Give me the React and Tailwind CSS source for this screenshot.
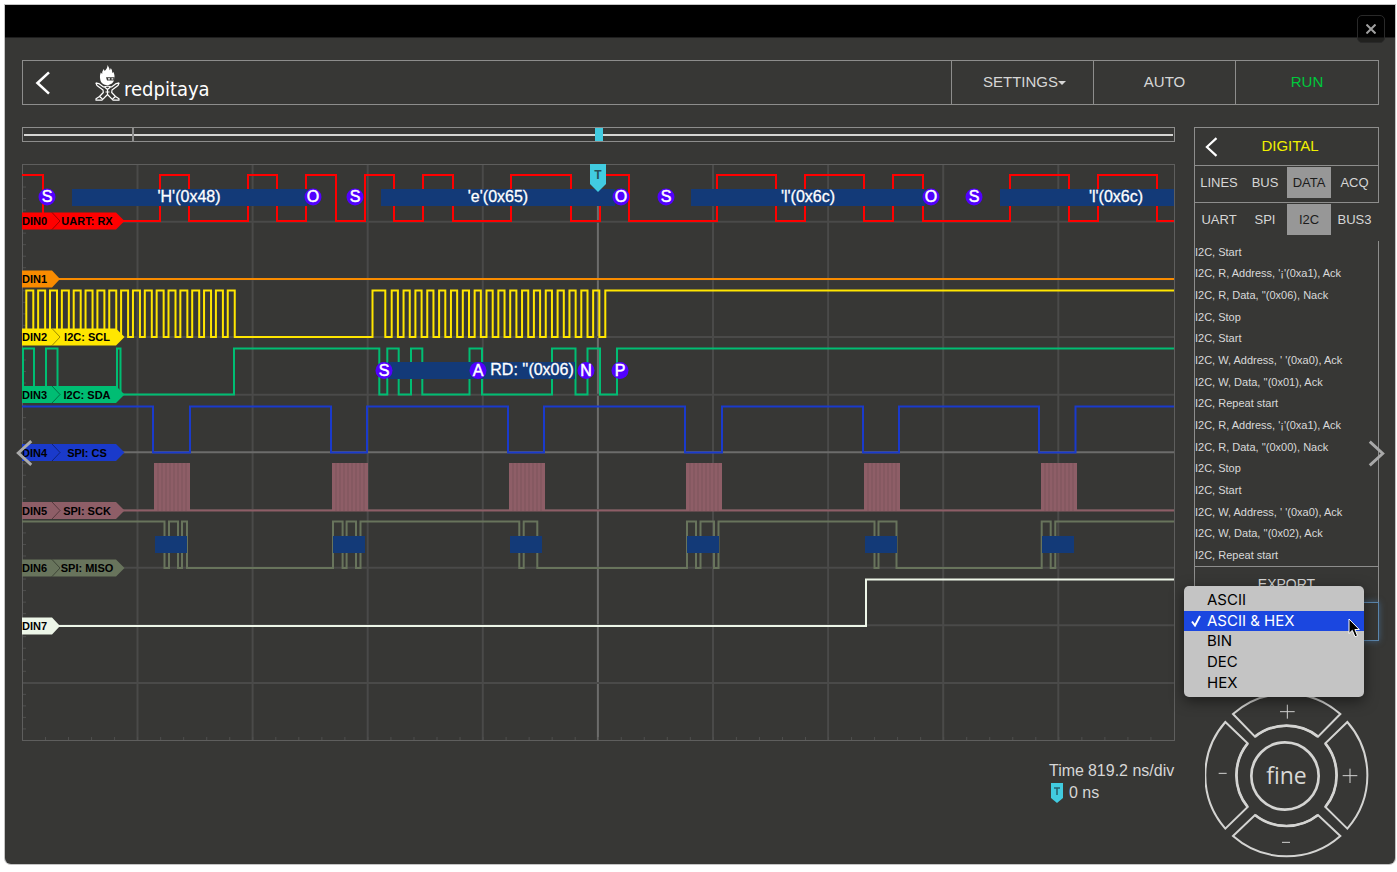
import React from "react";

const LEFT = 22;
const RIGHT = 1174;
const TOP = 164;
const BOTTOM = 741;

const range = (n) => Array.from({ length: n }, (_, i) => i);
const pulses = (start, count, period, width) =>
  range(count).flatMap((i) => [start + i * period, start + i * period + width]);

const CHANNELS = [
  {
    id: "DIN0", label: "UART: RX", color: "#ff0000", y: 221, high: 175, startHigh: true,
    edges: [43, 160, 189, 248, 277, 306, 336, 365, 394, 423, 453, 511, 571, 600, 629, 717, 776, 805, 864, 893, 923, 1010, 1069, 1098, 1157],
  },
  { id: "DIN1", color: "#f98b00", y: 279, high: 233, edges: [] },
  {
    id: "DIN2", label: "I2C: SCL", color: "#ffe600", y: 337, high: 290.5,
    edges: [...pulses(26.3, 18, 11.85, 7), 372.5, 385.3, ...pulses(391.7, 18, 11.85, 6.2), 605.3],
  },
  {
    id: "DIN3", label: "I2C: SDA", color: "#00bd73", y: 394.5, high: 348.5,
    edges: [23, 34, 46, 57.5, 117, 120.5, 234, 379.3, 387.3, 398.7, 411, 422.3, 469.5, 482, 552, 575.5, 587.5, 600, 617],
  },
  {
    id: "DIN4", label: "SPI: CS", color: "#1a3acb", y: 452.5, high: 406.5, startHigh: true,
    edges: [153, 190, 331, 367, 508, 544, 685, 722, 863, 899, 1039, 1075.5],
  },
  { id: "DIN5", label: "SPI: SCK", color: "#8e5e67", y: 510.5, high: 464, edges: [] },
  {
    id: "DIN6", label: "SPI: MISO", color: "#68745c", y: 568, high: 521.5, startHigh: true,
    edges: [164.5, 169, 178, 182, 187, 333, 342.6, 346.6, 356, 360.5, 519.3, 523.7, 537.3, 687, 696, 700.5, 714, 718.5, 874.5, 878.5, 896.5, 1041.7, 1050.7, 1055.3],
  },
  { id: "DIN7", color: "#edf6e8", y: 626, high: 579.5, edges: [866] },
];

const SPI_FRAMES = [154, 332, 509, 686, 864, 1041];

const UART_BARS = [[72, 307], [381, 615], [691, 925], [1000, 1174]];
const UART_TEXT = [["'H'(0x48)", 189], ["'e'(0x65)", 498], ["'l'(0x6c)", 808], ["'l'(0x6c)", 1116]];
const UART_MARKS = [["S", 47], ["O", 313], ["S", 355], ["O", 621], ["S", 666], ["O", 931], ["S", 974]];
const I2C_MARKS = [["S", 384], ["A", 478], ["N", 586], ["P", 620]];

const LOG = [
  "I2C, Start",
  "I2C, R, Address, '¡'(0xa1), Ack",
  "I2C, R, Data, ''(0x06), Nack",
  "I2C, Stop",
  "I2C, Start",
  "I2C, W, Address, ' '(0xa0), Ack",
  "I2C, W, Data, ''(0x01), Ack",
  "I2C, Repeat start",
  "I2C, R, Address, '¡'(0xa1), Ack",
  "I2C, R, Data, ''(0x00), Nack",
  "I2C, Stop",
  "I2C, Start",
  "I2C, W, Address, ' '(0xa0), Ack",
  "I2C, W, Data, ''(0x02), Ack",
  "I2C, Repeat start",
];

const FORMATS = ["ASCII", "ASCII & HEX", "BIN", "DEC", "HEX"];

function wavePath({ startHigh, edges, high, y }) {
  let up = Boolean(startHigh);
  let d = `M${LEFT} ${up ? high : y}`;
  for (const x of edges) {
    up = !up;
    d += `H${x}V${up ? high : y}`;
  }
  return `${d}H${RIGHT}`;
}

function Grid() {
  return (
    <g stroke="#4f4f4e" fill="none">
      {range(9).map((i) => (
        <path key={`v${i}`} strokeWidth="2" stroke={i === 4 ? "#6c6c6b" : "#4a4a49"} d={`M${137.5 + i * 115.1} ${TOP}V${BOTTOM}`} />
      ))}
      {range(9).map((i) => (
        <path key={`h${i}`} strokeWidth="2" stroke={i === 4 ? "#6c6c6b" : "#4a4a49"} d={`M${LEFT} ${221.7 + i * 57.66}H${RIGHT}`} />
      ))}
      {range(49).map((i) => (
        <path key={`l${i}`} d={`M${LEFT} ${175.5 + i * 11.53}h4`} />
      ))}
      {range(49).map((i) => (
        <path key={`b${i}`} d={`M${45.5 + i * 23.03} ${BOTTOM}v-4`} />
      ))}
      <rect x="22.5" y="164.5" width="1152" height="576" stroke="#5e5e5d" />
    </g>
  );
}

function Tag({ id, label, color, y }) {
  const t = y - 8.5;
  const b = y + 8.5;
  return (
    <g fontFamily="'Liberation Sans', Arial, sans-serif" fontSize="11" fontWeight="700">
      {label && <path d={`M52 ${t}H116L124.500 ${y}L116 ${b}H52Z`} fill={color} />}
      <path d={`M22 ${t}H52L60 ${y}L52 ${b}H22Z`} fill={color} />
      {label && <path d={`M52 ${t}L60 ${y}L52 ${b}`} fill="none" stroke="#000" strokeOpacity="0.4" />}
      <text x="22" y={y + 4} fill="#000">{id}</text>
      {label && <text x="87" y={y + 4} fill="#000" textAnchor="middle">{label}</text>}
    </g>
  );
}

function Mark({ letter, x, y }) {
  return (
    <g>
      <circle cx={x} cy={y} r="8.500" fill="#5200ff" />
      <text x={x} y={y + 5} fill="#fff" stroke="#fff" strokeWidth="0.500" textAnchor="middle">{letter}</text>
    </g>
  );
}

function Scope() {
  return (
    <svg viewBox="22 164 1153 578" className="block h-auto w-full" role="img" aria-label="Logic analyser traces">
      <Grid />
      {CHANNELS.map((c) => (
        <path key={c.id} d={wavePath(c)} fill="none" stroke={c.color} strokeWidth="2" />
      ))}
      {SPI_FRAMES.map((x) => (
        <g key={x}>
          <rect x={x} y="463" width="36" height="48" fill="#8e5e67" />
          <path d={range(8).map((i) => `M${x + 4 + i * 4} 463V511`).join("")} stroke="#7d545c" />
        </g>
      ))}
      <g fill="#133a78">
        {UART_BARS.map(([a, b]) => <rect key={a} x={a} y="189" width={b - a} height="17" />)}
        <rect x="388" y="362" width="187" height="17" />
        {SPI_FRAMES.map((x) => <rect key={x} x={x + 1} y="536" width="32" height="17" />)}
      </g>
      {CHANNELS.map((c) => <Tag key={c.id} {...c} />)}
      <g fontFamily="'Liberation Sans', Arial, sans-serif" fontSize="16" fill="#fff" stroke="#fff" strokeWidth="0.300">
        {UART_TEXT.map(([t, x]) => <text key={x} x={x} y="202" textAnchor="middle">{t}</text>)}
        <text x="532" y="375" textAnchor="middle">RD: ''(0x06)</text>
      </g>
      <g fontFamily="'Liberation Sans', Arial, sans-serif" fontSize="16">
        {UART_MARKS.map(([l, x]) => <Mark key={x} letter={l} x={x} y={197} />)}
        {I2C_MARKS.map(([l, x]) => <Mark key={x} letter={l} x={x} y={370.5} />)}
      </g>
      <path d="M590 164H606V184L598 192L590 184Z" fill="#41cbe0" />
      <text x="598" y="179" textAnchor="middle" fontFamily="Roboto, sans-serif" fontSize="12" fontWeight="700" fill="#26505a">T</text>
    </svg>
  );
}

function Chevron({ flip, className }) {
  return (
    <svg viewBox="0 0 16 26" className={className} fill="none" stroke="currentColor" strokeWidth="2.800" aria-hidden="true">
      <path d={flip ? "M1.500 1.500L14 13L1.500 24.500" : "M14.500 1.500L2 13L14.500 24.500"} />
    </svg>
  );
}

function Mascot() {
  return (
    <svg viewBox="0 0 25 36" className="h-9 w-[25px]" aria-hidden="true">
      <path fill="#fff" d="M12.500 0C13.700 2 14.600 3.300 14.600 5.200C15.300 4.600 15.600 4 15.700 3C17 4.800 17.400 6.300 17.100 8L18.400 7C19.600 9.500 19.800 11.500 19.300 14C18.700 17.800 16 20 12.500 20C8.500 20 5.700 17.800 5.200 14.200C4.700 11.500 5 9.500 5.800 7.500L7.200 9C7.100 7 7.600 5.500 8.800 4L9.600 6C11.500 4.300 12.700 2.500 12.500 0Z" />
      <path fill="#373735" d="M11 12.200H19.600V15.500H12Z" />
      <path fill="#fff" d="M13 13.200h2v1.300h-2zM16.500 13.200h1.800v1.300h-1.800z" />
      <g fill="none" stroke="#fff" strokeWidth="1.200" strokeLinejoin="round">
        <path d="M0.800 17.800L3.800 18.600L8.500 22L12.500 21L16.500 22L21.200 18.600L24.200 17.800M0.800 17.800L2 20.600L8 25L8.300 27.500L4.500 31.500L1 33.800V35.200H7L12.500 29.500L18 35.200H24V33.800L20.500 31.500L16.700 27.500L17 25L23 20.600L24.200 17.800" />
        <path d="M9.500 22L12.500 24.500L15.500 22M12.500 24.500V29M10.500 27H14.500M4.500 31.500L7.500 34M20.500 31.500L17.500 34" />
      </g>
    </svg>
  );
}

function TabRow({ tabs, active, label }) {
  return (
    <nav aria-label={label} className="grid grid-cols-[48px_44px_44px_1fr] pt-px text-[13px] leading-[30px] text-[#d6d6d6]">
      {tabs.map((t) => (
        <button
          key={t}
          type="button"
          aria-pressed={t === active}
          className={t === active ? "h-[31px] bg-[#979797] text-[#1c1c1c]" : "h-[31px]"}
        >
          {t}
        </button>
      ))}
    </nav>
  );
}

function FormatPicker() {
  return (
    <div className="relative">
      <select
        aria-label="Data format"
        defaultValue="ASCII & HEX"
        className="block h-[39px] w-full appearance-none border border-[#5b86ad] bg-[#373735] px-3 text-sm text-transparent shadow-[0_0_6px_rgba(80,140,200,0.5)] outline-none"
      >
        {FORMATS.map((f) => <option key={f}>{f}</option>)}
      </select>
      <ul
        role="listbox"
        aria-label="Data format"
        className="absolute -top-4 -left-2.5 z-10 grid h-[111px] w-[180px] auto-rows-fr rounded-[5px] bg-[#c4c4c4] py-1 font-['Inter',sans-serif] text-[15px] leading-5 text-black shadow-[0_4px_14px_rgba(0,0,0,0.5)]"
      >
        {FORMATS.map((f) => {
          const on = f === "ASCII & HEX";
          return (
            <li
              key={f}
              role="option"
              aria-selected={on}
              className={on ? "flex items-center bg-[#1b47e0] text-white" : "flex items-center"}
            >
              <span className="flex w-[23px] justify-center">
                {on && (
                  <svg viewBox="0 0 10 12" className="h-3 w-2.5" fill="none" stroke="currentColor" strokeWidth="2" aria-hidden="true">
                    <path d="M1 6.500L4 10.500L9 1" />
                  </svg>
                )}
              </span>
              {f}
            </li>
          );
        })}
        <svg viewBox="0 0 12 20" className="absolute top-8 left-[164px] h-5 w-3" aria-hidden="true">
          <path d="M1 1V15.500L4.300 12.300L7 18.800L9.500 17.700L6.900 11.500H11.300Z" fill="#000" stroke="#fff" strokeWidth="1" />
        </svg>
      </ul>
    </div>
  );
}

function Dial() {
  return (
    <div className="relative mx-auto mt-[53px] h-[164px] w-[164px]">
      <svg viewBox="106 432 492 492" className="block h-full w-full" fill="none" stroke="#d4d4d2" strokeWidth="6" aria-hidden="true">
        <path d="M190 492A243 243 0 0 1 512 492L445 560A152 152 0 0 0 256 560Z" />
        <path d="M190 858A243 243 0 0 0 512 858L445 795A152 152 0 0 1 256 795Z" />
        <path d="M167 516A243 243 0 0 0 167 836L234 771A152 152 0 0 1 234 580Z" />
        <path d="M533 516A243 243 0 0 1 533 836L467 771A152 152 0 0 0 467 580Z" />
        <g strokeWidth="8">
          <path d="M445 560A152 152 0 0 0 256 560M445 795A152 152 0 0 1 256 795M234 771A152 152 0 0 1 234 580M467 771A152 152 0 0 0 467 580" />
          <circle cx="346" cy="678" r="101" />
        </g>
        <path strokeWidth="3" d="M331 485H375M353 464V506M519 677H563M541 656V699M147 670H171M337 877H361" />
      </svg>
      <div className="absolute inset-0 grid grid-cols-[42px_1fr_42px] grid-rows-[42px_1fr_42px] font-['Open_Sans',sans-serif]">
        <button type="button" aria-label="Increase vertical" className="col-start-2 row-start-1" />
        <button type="button" aria-label="Decrease horizontal" className="col-start-1 row-start-2" />
        <button type="button" className="col-start-2 row-start-2 pb-0.5 text-[23px] font-medium text-[#d8d8d6]">fine</button>
        <button type="button" aria-label="Increase horizontal" className="col-start-3 row-start-2" />
        <button type="button" aria-label="Decrease vertical" className="col-start-2 row-start-3" />
      </div>
    </div>
  );
}

export default function App() {
  return (
    <div className="min-h-screen bg-white pt-[5px] pr-0.5 pl-[5px] font-['Liberation_Sans',Arial,sans-serif]">
      <div className="relative rounded-b-[6px] bg-[#373735] pb-1.5 shadow-[0_0_0_1px_#c4c4c4]">
        <div className="h-[33px] border-b border-[#1e1e1e] bg-black" />
        <button
          type="button"
          aria-label="Close"
          className="absolute top-2.5 right-2.5 flex h-7 w-7 items-center justify-center rounded-[5px] border border-[#292929] bg-black/40 text-[#a0a0a0]"
        >
          <svg viewBox="0 0 10 10" className="h-2.5 w-2.5" stroke="currentColor" strokeWidth="2" aria-hidden="true">
            <path d="M0.500 0.500L9.500 9.500M9.500 0.500L0.500 9.500" />
          </svg>
        </button>

        <div className="pt-[22px] pr-4 pl-[17px]">
          <header className="flex h-[45px] border border-[#8d8d8c] text-[15px] text-[#d6d6d6]">
            <div className="flex flex-1 items-center">
              <a href="#back" aria-label="Back" className="ml-3 text-white">
                <Chevron className="h-6 w-4" />
              </a>
              <a href="#home" className="ml-11 flex items-center gap-1 text-white">
                <Mascot />
                <span className="pt-3 font-['DejaVu_Sans_Condensed','DejaVu_Sans',sans-serif] text-[20px] leading-6">redpitaya</span>
              </a>
            </div>
            <button type="button" className="flex w-[142px] items-center justify-center border-l border-[#8d8d8c] pl-1">
              SETTINGS
              <svg viewBox="0 0 8 4" className="h-1 w-2" fill="currentColor" aria-hidden="true"><path d="M0 0H8L4 4Z" /></svg>
            </button>
            <button type="button" className="w-[142px] border-l border-[#8d8d8c]">AUTO</button>
            <button type="button" className="w-[143px] border-l border-[#8d8d8c] text-[#00c83c]">RUN</button>
          </header>

          <main className="mt-[22px] flex items-start gap-[19px]">
            <section className="min-w-0 flex-1">
              <div className="relative flex h-[15px] items-center border border-[#8d8d8c] px-px">
                <div className="h-0.5 w-full bg-[#d5d5d3]" />
                <div className="absolute inset-y-0 left-[9.500%] w-0.5 bg-[#8d8d8c]" />
                <div className="absolute inset-y-0 left-1/2 w-2 -translate-x-1/2 bg-[#41cbe0]" />
              </div>
              <div className="relative mt-[22px]">
                <Scope />
                <button type="button" aria-label="Previous" className="absolute top-1/2 -left-1.5 -translate-y-1/2 text-[#a9a9a9]">
                  <Chevron className="h-[27px] w-[17px]" />
                </button>
              </div>
              <dl className="mt-[18px] ml-auto w-[126px] text-[16px] leading-[22px] text-[#d6d6d6]">
                <div className="flex gap-1">
                  <dt>Time</dt>
                  <dd className="whitespace-nowrap">819.2 ns/div</dd>
                </div>
                <div className="flex items-center gap-1">
                  <dt>
                    <svg viewBox="0 0 16 22" className="h-[22px] w-4" aria-label="Trigger">
                      <path d="M2 1H14V16L8 21L2 16Z" fill="#41cbe0" />
                      <path d="M5 6H11M8 6V13" stroke="#26606c" strokeWidth="1.500" />
                    </svg>
                  </dt>
                  <dd>0 ns</dd>
                </div>
              </dl>
            </section>

            <aside className="relative w-[185px] shrink-0">
              <div className="flex h-[38px] items-center border border-b-0 border-[#8d8d8c]">
                <a href="#menu" aria-label="Back to menu" className="ml-2.5 text-white">
                  <Chevron className="h-5 w-[13px]" />
                </a>
                <h2 className="flex-1 pr-4 text-center text-[15px] text-[#f0f000]">DIGITAL</h2>
              </div>
              <div className="h-[38px] border border-[#8d8d8c]">
                <TabRow label="Sections" tabs={["LINES", "BUS", "DATA", "ACQ"]} active="DATA" />
              </div>
              <div className="h-[38px] border-l border-[#8d8d8c] pr-px">
                <TabRow label="Decoders" tabs={["UART", "SPI", "I2C", "BUS3"]} active="I2C" />
              </div>
              <ul className="grid h-[325px] auto-rows-fr items-center border-x border-[#8d8d8c] text-[11px] leading-4 text-[#d9d9d9]">
                {LOG.map((line, i) => <li key={i}>{line}</li>)}
              </ul>
              <button type="button" className="block h-[36px] w-full border border-b-0 border-[#8d8d8c] text-[14px] text-[#d6d6d6]">
                EXPORT
              </button>
              <FormatPicker />
              <Dial />
              <button type="button" aria-label="Next" className="absolute top-[313px] -right-1.5 text-[#a9a9a9]">
                <Chevron flip className="h-[27px] w-[17px]" />
              </button>
            </aside>
          </main>
        </div>
      </div>
    </div>
  );
}
